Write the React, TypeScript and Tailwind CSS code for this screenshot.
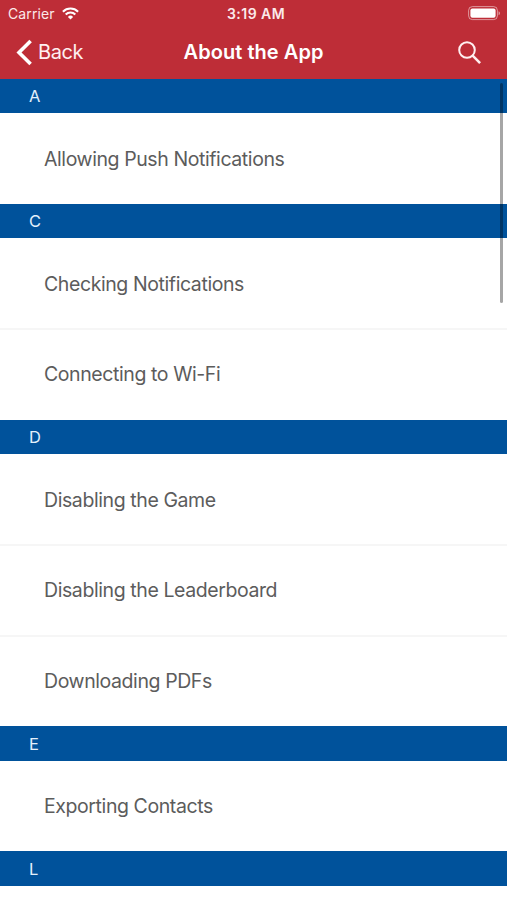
import React from 'react';

const sections = [
  { letter: 'A', items: ['Allowing Push Notifications'] },
  { letter: 'C', items: ['Checking Notifications', 'Connecting to Wi-Fi'] },
  { letter: 'D', items: ['Disabling the Game', 'Disabling the Leaderboard', 'Downloading PDFs'] },
  { letter: 'E', items: ['Exporting Contacts'] },
  { letter: 'L', items: [] },
];

const StatusBar = () => (
  <div className="grid grid-cols-[1fr_auto_1fr] items-center h-[27px] pl-2 pr-[6px] text-[#fbe9ea]">
    <div className="flex items-center gap-[7px]">
      <span className="text-[14px] leading-none tracking-[0.1px]">Carrier</span>
      <svg width="17" height="13" viewBox="0 0 17 13" fill="none" stroke="white" strokeWidth="2.1">
        <path d="M0.9 4.7a10.8 10.8 0 0 1 15.2 0" />
        <path d="M3.7 7.5a6.8 6.8 0 0 1 9.6 0" />
        <path d="M8.5 12.6l-2.6-2.7a3.7 3.7 0 0 1 5.2 0z" fill="white" stroke="none" />
      </svg>
    </div>
    <span className="pl-[3px] text-center text-[14px] leading-none font-semibold tracking-[0.45px] whitespace-nowrap">3:19 AM</span>
    <svg className="justify-self-end" width="33" height="15" viewBox="0 0 33 15">
      <rect x="0.6" y="0.6" width="28.8" height="13" rx="3.8" fill="none" stroke="white" strokeOpacity="0.5" strokeWidth="1" />
      <rect x="2.4" y="2.4" width="25.2" height="9.4" rx="2" fill="white" />
      <path d="M30.6 5.2c1.7 0.8 1.7 3.2 0 4z" fill="white" fillOpacity="0.6" />
    </svg>
  </div>
);

const NavBar = () => (
  <div className="grid grid-cols-[1fr_auto_1fr] items-center h-[50px] px-4 text-white">
    <button className="flex items-center gap-[6px] text-[#ffeff0]">
      <svg width="16" height="27" viewBox="0 0 16 27" fill="none" stroke="white" strokeWidth="3.6">
        <path d="M14.6 1.9L3 13.5l11.6 11.6" />
      </svg>
      <span className="text-[20px] leading-none tracking-[-0.4px]">Back</span>
    </button>
    <h1 className="text-[20px] leading-none font-semibold tracking-[0.05px]">About the App</h1>
    <svg className="justify-self-end mr-[10px]" width="23" height="23" viewBox="0 0 23 23" fill="none" stroke="#ffeff0" strokeWidth="2">
      <circle cx="9" cy="9" r="7.8" />
      <path d="M14.4 14.4l7.7 7.7" strokeWidth="2.5" />
    </svg>
  </div>
);

const App = () => {
  return (
    <div className="relative h-[900px] overflow-hidden bg-white font-['Inter','Liberation_Sans',sans-serif]">
      <header className="h-[79px] bg-[#be2d37]">
        <StatusBar />
        <NavBar />
      </header>

      <main>
        {sections.map((section) => (
          <section key={section.letter}>
            <h2 className="flex items-center h-[34.15px] pt-px pl-[29px] bg-[#00529b] text-[#e3f0fb] text-[16.5px] leading-none">
              {section.letter}
            </h2>
            <ul>
              {section.items.map((item) => (
                <li
                  key={item}
                  className="flex items-center h-[91.85px] -mt-px pl-11 text-[19.5px] tracking-[-0.41px] text-[#5c5c5c] border-t-2 border-[#f6f6f6] first:mt-0 first:h-[90.85px] first:border-t-0 first:pt-[2px]"
                >
                  {item}
                </li>
              ))}
            </ul>
          </section>
        ))}
      </main>

      {/* scroll indicator */}
      <div className="absolute top-[83px] right-[4px] w-[3px] h-[220px] rounded-full bg-black/35" />
    </div>
  );
};

export default App;
